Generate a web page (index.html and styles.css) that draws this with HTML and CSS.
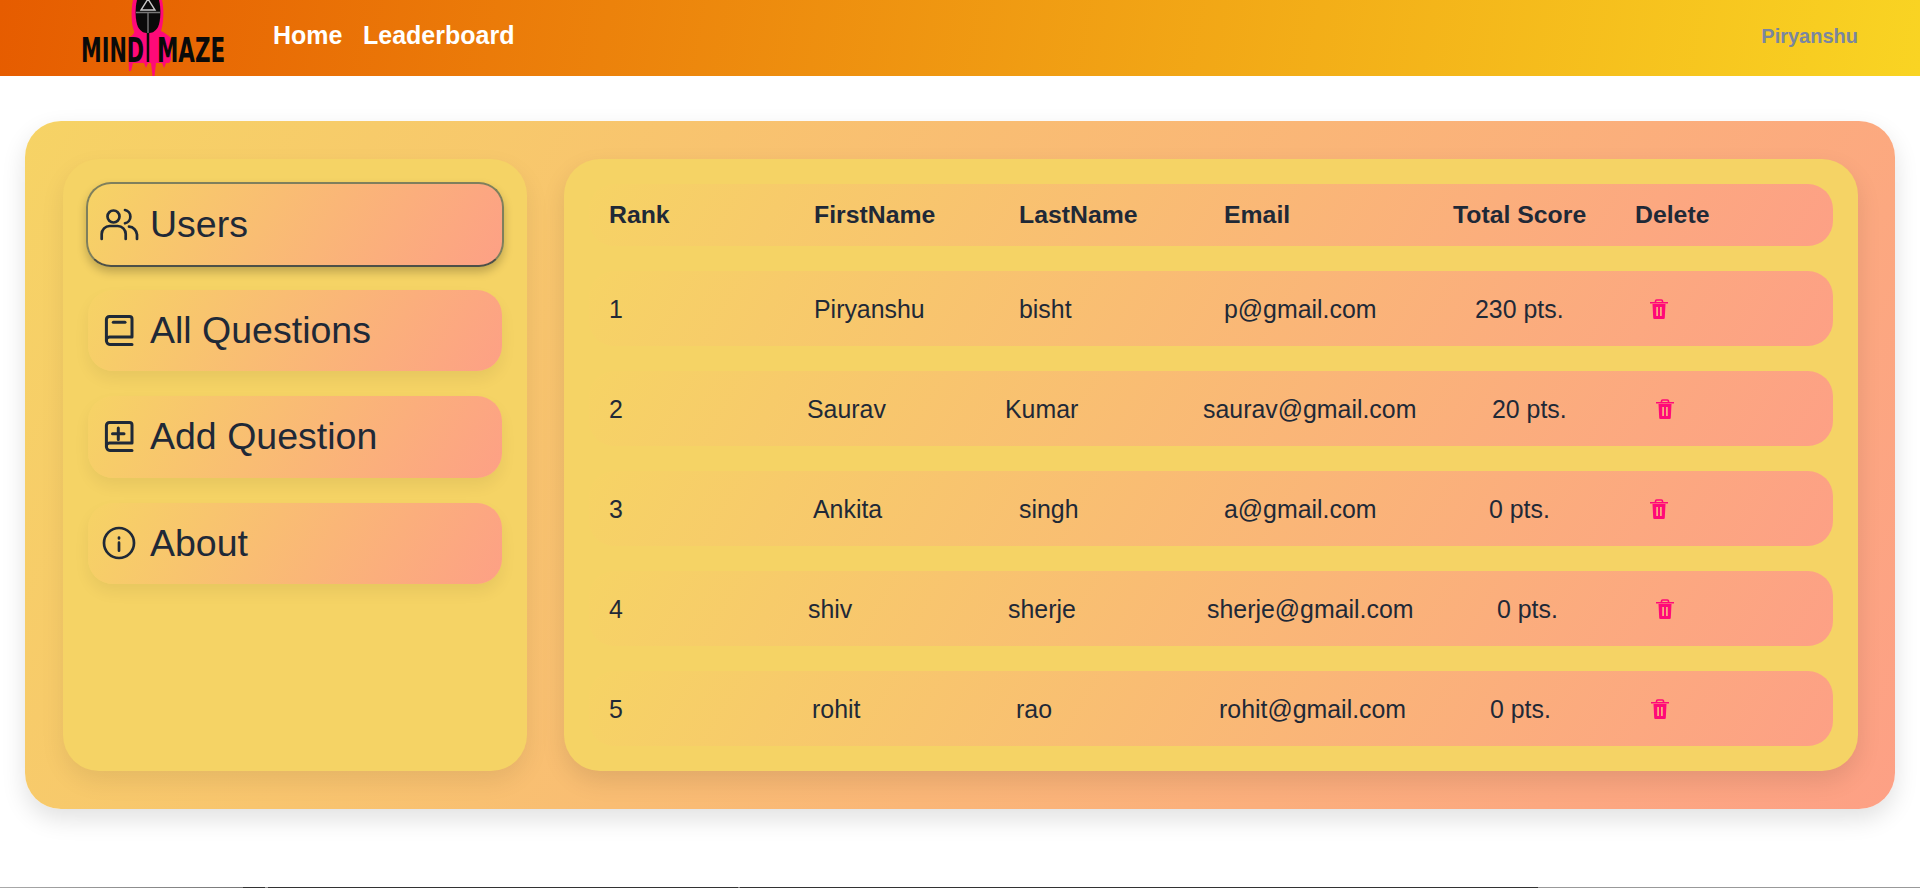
FILE: index.html
```html
<!DOCTYPE html>
<html lang="en">
<head>
    <meta charset="UTF-8">
    <meta name="viewport" content="width=device-width, initial-scale=1.0">
    <title>Mind Maze Admin</title>
    <link rel="stylesheet" href="styles.css">
</head>
<body>
    <nav class="navbar">
        <a class="logo" href="#">
            <svg class="logo-figure" width="46" height="76" viewBox="0 0 46 76">
                <path fill="#ff0a78" d="M5 0H34C36 8 36 22 33 31C37 33 40 35 43 38V60L41 63H38L36 68L34 63H28L26.500 76H24.500L23 63H20L18 68L16 63H5L3 71H1L0.600 62V38C4 36 7 33 6 31C3 24 3 8 5 0Z"/>
                <path fill="#0a0a0a" d="M9 0H31C33 8 33 20 30 27C27 32 24 33 20 33C16 33 13 32 10 27C7 20 7 8 9 0Z"/>
                <path fill="none" stroke="#c9c9c9" stroke-width="1.400" d="M20 -1L27 10H13Z"/>
                <path fill="none" stroke="#777" stroke-width="1.400" d="M8 12.500H32M20 12.500V33"/>
                <path fill="none" stroke="#0a0a0a" stroke-width="2.500" d="M20 33V62"/>
            </svg>
            <span class="logo-word mind">MIND</span>
            <span class="logo-word maze">MAZE</span>
        </a>
        <a class="nav-link" href="#">Home</a>
        <a class="nav-link" href="#">Leaderboard</a>
        <span class="nav-user">Piryanshu</span>
    </nav>

    <main class="dashboard">
        <aside class="sidebar">
            <a class="side-item active" href="#">
                <svg class="side-icon" viewBox="0 0 40 40" width="40" height="40">
                    <circle cx="13.500" cy="11.500" r="6"/>
                    <path d="M1.700 34V29a8 8 0 0 1 8-8h8a8 8 0 0 1 8 8v5"/>
                    <path d="M25 5a6.800 6.800 0 0 1 0 13.300"/>
                    <path d="M29 21.700a8.500 8.500 0 0 1 8 8V34"/>
                </svg>
                Users
            </a>
            <a class="side-item" href="#">
                <svg class="side-icon book" viewBox="0 0 40 40" width="40" height="40">
                    <path d="M6.400 30V8.500a3 3 0 0 1 3-3H29.500a2.500 2.500 0 0 1 2.500 2.500V26H9.500a3 3 0 0 0-3 3.500a3.500 3.500 0 0 0 3.500 4H32"/>
                    <path d="M13.300 11.200H25"/>
                </svg>
                All Questions
            </a>
            <a class="side-item" href="#">
                <svg class="side-icon book" viewBox="0 0 40 40" width="40" height="40">
                    <path d="M6.400 30V8.500a3 3 0 0 1 3-3H29.500a2.500 2.500 0 0 1 2.500 2.500V26H9.500a3 3 0 0 0-3 3.500a3.500 3.500 0 0 0 3.500 4H32"/>
                    <path d="M18.300 11V22.500M12.500 16.800H24"/>
                </svg>
                Add Question
            </a>
            <a class="side-item" href="#">
                <svg class="side-icon" viewBox="0 0 40 40" width="40" height="40">
                    <circle cx="19" cy="20" r="15"/>
                    <path d="M19 19.700V27.700M19 14.500V15.500"/>
                </svg>
                About
            </a>
        </aside>

        <section class="board">
            <div class="row head">
                <span>Rank</span>
                <span>FirstName</span>
                <span>LastName</span>
                <span>Email</span>
                <span>Total Score</span>
                <span>Delete</span>
            </div>
            <div class="row user-1">
                <span>1</span>
                <span>Piryanshu</span>
                <span>bisht</span>
                <span>p@gmail.com</span>
                <span>230 pts.</span>
                <svg class="trash" viewBox="0 0 18 20" width="18" height="20"><use href="#trash-icon"/></svg>
            </div>
            <div class="row user-2">
                <span>2</span>
                <span>Saurav</span>
                <span>Kumar</span>
                <span>saurav@gmail.com</span>
                <span>20 pts.</span>
                <svg class="trash" viewBox="0 0 18 20" width="18" height="20"><use href="#trash-icon"/></svg>
            </div>
            <div class="row user-3">
                <span>3</span>
                <span>Ankita</span>
                <span>singh</span>
                <span>a@gmail.com</span>
                <span>0 pts.</span>
                <svg class="trash" viewBox="0 0 18 20" width="18" height="20"><use href="#trash-icon"/></svg>
            </div>
            <div class="row user-4">
                <span>4</span>
                <span>shiv</span>
                <span>sherje</span>
                <span>sherje@gmail.com</span>
                <span>0 pts.</span>
                <svg class="trash" viewBox="0 0 18 20" width="18" height="20"><use href="#trash-icon"/></svg>
            </div>
            <div class="row user-5">
                <span>5</span>
                <span>rohit</span>
                <span>rao</span>
                <span>rohit@gmail.com</span>
                <span>0 pts.</span>
                <svg class="trash" viewBox="0 0 18 20" width="18" height="20"><use href="#trash-icon"/></svg>
            </div>
        </section>
    </main>

    <div class="bottom-strip"></div>

    <svg width="0" height="0" class="defs">
        <symbol id="trash-icon" viewBox="0 0 18 20">
            <path fill="none" stroke="currentColor" stroke-width="1.600" d="M0 3.800H18M5.500 3.500V2.200a1.200 1.200 0 0 1 1.200-1.200h4.600a1.200 1.200 0 0 1 1.200 1.200V3.500"/>
            <path fill="currentColor" fill-rule="evenodd" d="M2.500 5H15.500L14.800 18.800a1.200 1.200 0 0 1-1.200 1.200H4.400a1.200 1.200 0 0 1-1.200-1.200ZM6.200 8V17H8V8ZM10 8V17H11.800V8Z"/>
        </symbol>
    </svg>
</body>
</html>
```

FILE: styles.css
```css
* {
    box-sizing: border-box;
}
body {
    margin: 0;
    height: 888px;
    overflow: hidden;
    position: relative;
    background: #fff;
    color: #1f2937;
    font-family: "Liberation Sans", Arial, sans-serif;
}
a {
    color: inherit;
    text-decoration: none;
}

/* top bar */
.navbar {
    display: flex;
    align-items: center;
    height: 76px;
    padding: 0 62px 0 81px;
    background: linear-gradient(100deg, #e65c00, #f9d423);
}
.logo {
    position: relative;
    display: flex;
    justify-content: space-between;
    flex: none;
    width: 144px;
    height: 76px;
    padding-top: 34px;
    margin-right: 48px;
}
.logo-figure {
    position: absolute;
    left: 47px;
    top: 0;
}
.logo-word {
    position: relative;
    flex: none;
    font-family: "DejaVu Sans", sans-serif;
    font-size: 33px;
    line-height: 33px;
    font-weight: 700;
    color: #0a0a0a;
    white-space: nowrap;
    transform-origin: left;
}
.logo-word.mind {
    width: 63px;
    transform: scaleX(0.63);
}
.logo-word.maze {
    width: 68px;
    transform: scaleX(0.65);
}
.nav-link {
    margin: 0 20.500px 5px 0;
    font-size: 25px;
    font-weight: 700;
    color: #fff;
}
.nav-user {
    margin: 0 0 3px auto;
    font-size: 20px;
    font-weight: 700;
    color: #7a86a0;
}

/* main card */
.dashboard {
    display: flex;
    gap: 37px;
    height: 688px;
    margin: 45px 25px 0;
    padding: 38px 37px 38px 38px;
    border-radius: 36px;
    background: linear-gradient(120deg, #f6d365, #fda085);
    box-shadow: 0 10px 25px rgba(0, 0, 0, 0.12);
}
.sidebar {
    display: flex;
    flex-direction: column;
    gap: 25px;
    width: 464px;
    padding: 23px 25px;
    border-radius: 36px;
    background: #f5d365;
    box-shadow: 0 10px 25px rgba(0, 0, 0, 0.08);
}
.side-item {
    display: flex;
    align-items: center;
    gap: 10px;
    height: 81.300px;
    padding: 0 12px;
    border-radius: 25px;
    font-size: 37.500px;
    background: linear-gradient(120deg, #f6d365, #fda085);
    box-shadow: 0 8px 16px rgba(0, 0, 0, 0.06);
}
/* the active item grows a little over its neighbours */
.side-item.active {
    height: 85px;
    margin: 0 -2px -2px;
    border: 2px solid #7f7f5c;
    border-bottom-color: #4d5048;
    box-shadow: 0 5px 10px rgba(0, 0, 0, 0.22);
}
.side-icon {
    flex: none;
    fill: none;
    stroke: currentColor;
    stroke-width: 2.700;
    stroke-linecap: round;
    stroke-linejoin: round;
}
.side-icon.book {
    stroke-width: 3;
}

/* users table */
.board {
    flex: 1;
    display: flex;
    flex-direction: column;
    gap: 25px;
    padding: 25px;
    border-radius: 36px;
    background: #f5d365;
    box-shadow: 0 10px 25px rgba(0, 0, 0, 0.1);
}
.row {
    display: grid;
    align-items: center;
    height: 75.200px;
    padding: 1.500px 0 0 20px;
    border-radius: 25px;
    font-size: 24.900px;
    white-space: nowrap;
    background: linear-gradient(120deg, #f6d365, #fda085);
}
.head {
    height: 62px;
    padding-top: 0;
    font-size: 24.800px;
    font-weight: 700;
    grid-template-columns: 205px 205px 205px 229px 182px auto;
}
/* each row was its own auto-sized table in the original, so the columns drift */
.user-1 { grid-template-columns: 205px 205px 205px 251px 175px auto; }
.user-2 { grid-template-columns: 198px 198px 198px 289px 164px auto; }
.user-3 { grid-template-columns: 204px 206px 205px 265px 161px auto; }
.user-4 { grid-template-columns: 199px 200px 199px 290px 159px auto; }
.user-5 { grid-template-columns: 203px 204px 203px 271px 161px auto; }
.trash {
    color: #ff0a78;
}
.defs {
    position: absolute;
}
.bottom-strip {
    position: absolute;
    left: 0;
    right: 0;
    bottom: 0;
    height: 1px;
    background: linear-gradient(90deg, #aaa 0, #777 243px, #333 243px, #333 265px, #999 265px, #999 268px, #333 268px, #333 738px, #888 738px, #888 740px, #333 740px, #333 1538px, #999 1538px);
}
```
